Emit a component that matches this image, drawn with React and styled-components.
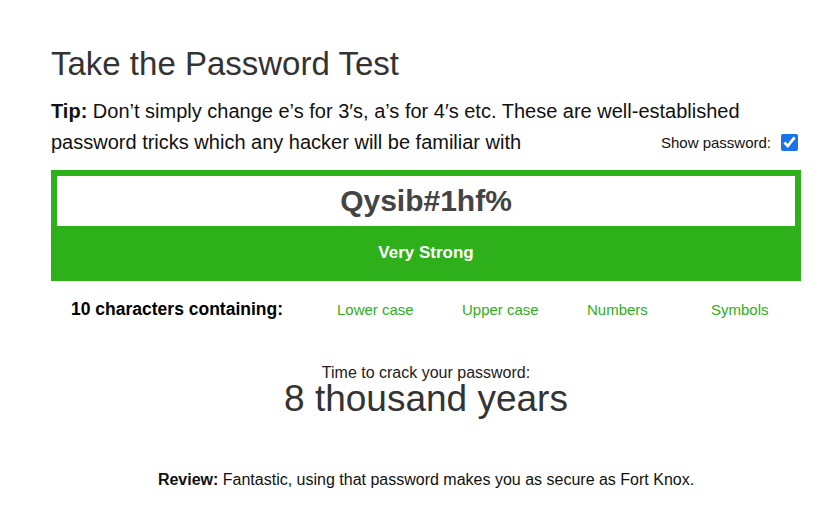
import React from 'react';
import styled, { createGlobalStyle } from 'styled-components';

const GREEN = '#2db019';

const GlobalStyle = createGlobalStyle`
	body {
		margin: 0;
		background: #fff;
		font-family: 'Liberation Sans', Arial, sans-serif;
	}
`;

const Page = styled.div`
	width: 750px;
	padding: 46px 0 0 51px;
`;

const Title = styled.h1`
	margin: 0 0 13px;
	font-size: 33px;
	font-weight: 400;
	line-height: 1.117;
	color: #333;
`;

const Tip = styled.p`
	margin: 0;
	font-size: 20px;
	line-height: 31px;
	color: #111;

	strong {
		font-weight: 700;
	}
`;

const ShowLabel = styled.label`
	float: right;
	display: inline-flex;
	align-items: center;
	height: 31px;
	font-size: 15px;
	color: #111;

	input {
		width: 17px;
		height: 17px;
		margin: 0 3px 0 10px;
		accent-color: #1a73e8;
	}
`;

const Meter = styled.div`
	margin-top: 12px;
	background: ${GREEN};
	padding: 6px 6px 0;
`;

const PasswordField = styled.div`
	height: 50px;
	background: #fff;
	display: flex;
	align-items: center;
	justify-content: center;
	font-size: 30px;
	font-weight: 700;
	color: #444;
`;

const Strength = styled.div`
	height: 55px;
	display: flex;
	align-items: center;
	justify-content: center;
	font-size: 17px;
	font-weight: 700;
	color: #fff;
`;

const Contains = styled.div`
	margin-top: 18px;
	display: grid;
	grid-template-columns: 286px 125px 125px 124px 90px;
	align-items: baseline;
`;

const Count = styled.div`
	padding-left: 20px;
	font-size: 17.5px;
	font-weight: 700;
	color: #000;
`;

const Check = styled.div`
	font-size: 15px;
	color: ${props => (props.active ? GREEN : '#bbb')};
`;

const Crack = styled.div`
	margin-top: 45px;
	text-align: center;
	color: #222;
`;

const CrackLabel = styled.div`
	font-size: 16px;
	line-height: 1;
`;

const CrackTime = styled.div`
	margin-top: -1px;
	font-size: 37px;
	line-height: 1;
	color: #333;
`;

const Review = styled.p`
	margin: 54px 0 0;
	text-align: center;
	font-size: 16px;
	color: #111;

	strong {
		font-weight: 700;
	}
`;

const checks = ['Lower case', 'Upper case', 'Numbers', 'Symbols'];

const App = () => {
	return (
		<Page>
			<GlobalStyle />
			<Title>Take the Password Test</Title>
			<Tip>
				<strong>Tip:</strong> Don’t simply change e’s for 3′s, a’s for 4′s etc. These are
				well-established password tricks which any hacker will be familiar with
				<ShowLabel>
					Show password:
					<input type="checkbox" defaultChecked />
				</ShowLabel>
			</Tip>

			<Meter>
				<PasswordField>Qysib#1hf%</PasswordField>
				<Strength>Very Strong</Strength>
			</Meter>

			<Contains>
				<Count>10 characters containing:</Count>
				{checks.map(c => (
					<Check key={c} active>
						{c}
					</Check>
				))}
			</Contains>

			<Crack>
				<CrackLabel>Time to crack your password:</CrackLabel>
				<CrackTime>8 thousand years</CrackTime>
			</Crack>

			<Review>
				<strong>Review:</strong> Fantastic, using that password makes you as secure as Fort Knox.
			</Review>
		</Page>
	);
};

export default App;
